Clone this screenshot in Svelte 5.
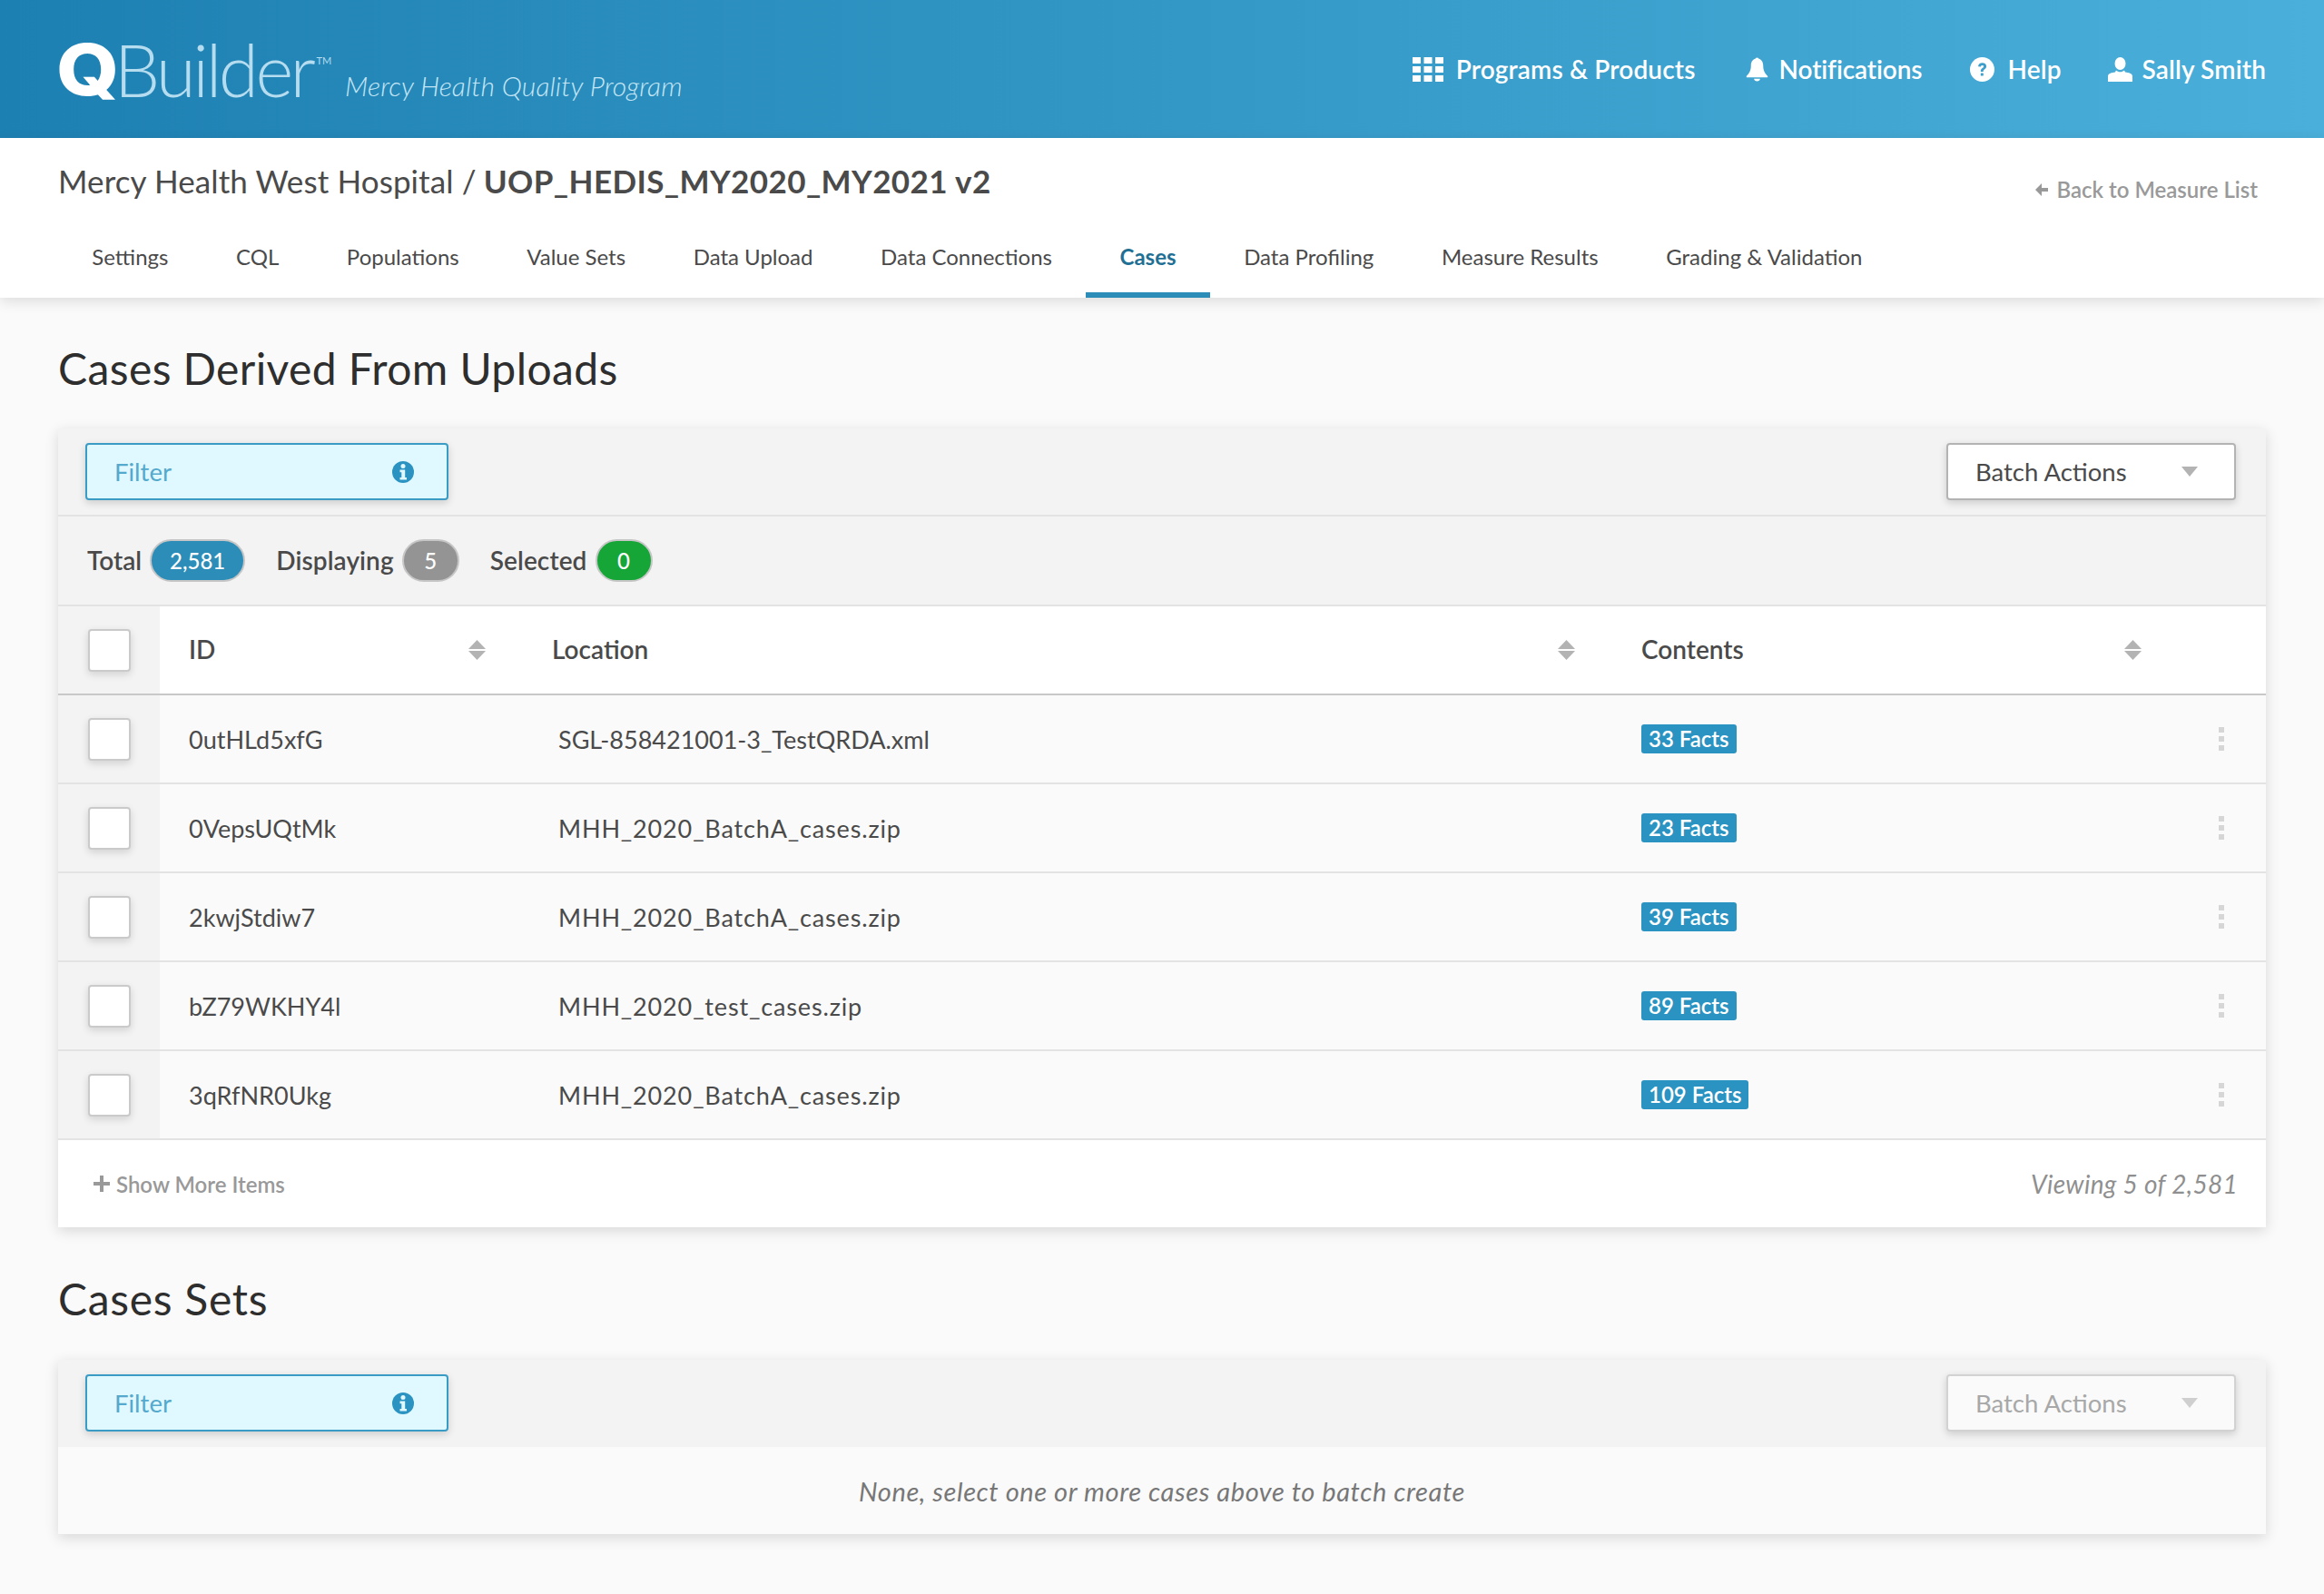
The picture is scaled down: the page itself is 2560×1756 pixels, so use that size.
<script>
  const tabs = ['Settings','CQL','Populations','Value Sets','Data Upload','Data Connections','Cases','Data Profiling','Measure Results','Grading & Validation'];
  const rows = [
    ['0utHLd5xfG','SGL-858421001-3_TestQRDA.xml','33 Facts'],
    ['0VepsUQtMk','MHH_2020_BatchA_cases.zip','23 Facts'],
    ['2kwjStdiw7','MHH_2020_BatchA_cases.zip','39 Facts'],
    ['bZ79WKHY4l','MHH_2020_test_cases.zip','89 Facts'],
    ['3qRfNR0Ukg','MHH_2020_BatchA_cases.zip','109 Facts']
  ];
  const cols = ['ID','Location','Contents'];
</script>

{#snippet toolbarItems(disabled)}
  <div class="filter">
    <span>Filter</span>
    <svg class="info" viewBox="0 0 24 24" width="24" height="24"><circle cx="12" cy="12" r="12" fill="#2b93c1"/><circle cx="12" cy="5.600" r="2.500" fill="#e0f8ff"/><path d="M8.500 9.600h5.700v8.400h1.800v2.600H8.500V18h1.800v-5.800H8.500z" fill="#e0f8ff"/></svg>
  </div>
  <div class="batch" class:disabled>
    <span>Batch Actions</span>
    <svg viewBox="0 0 18 11" width="18" height="11"><path d="M0 0h18L9 11z" fill="currentColor"/></svg>
  </div>
{/snippet}

{#snippet sortIcon()}
  <svg class="sort" viewBox="0 0 19 22" width="19" height="22"><path d="M9.500 0l9.500 10H0zM0 12h19L9.500 22z" fill="#b3b3b3"/></svg>
{/snippet}

<header class="top">
  <div class="brand">
    <div class="logo"><span class="q">Q</span><span class="builder">Builder</span><span class="tm">TM</span></div>
    <div class="program">Mercy Health Quality Program</div>
  </div>
  <nav class="topnav">
    <div class="tn">
      <svg viewBox="0 0 34 27" width="34" height="27" fill="#fff"><rect x="0" y="0" width="9" height="7"/><rect x="12.500" y="0" width="9" height="7"/><rect x="25" y="0" width="9" height="7"/><rect x="0" y="10" width="9" height="7"/><rect x="12.500" y="10" width="9" height="7"/><rect x="25" y="10" width="9" height="7"/><rect x="0" y="20" width="9" height="7"/><rect x="12.500" y="20" width="9" height="7"/><rect x="25" y="20" width="9" height="7"/></svg>
      <span>Programs &amp; Products</span>
    </div>
    <div class="tn bell">
      <svg viewBox="0 0 26 27" width="25" height="27" fill="#fff"><circle cx="13" cy="2.200" r="2.200"/><path d="M13 1c4.500 0 7 3.500 7 8 0 6 2 8.500 5 12 .6.800.2 1.600-.8 1.600H1.800c-1 0-1.400-.8-.8-1.600 3-3.500 5-6 5-12 0-4.500 2.500-8 7-8z"/><path d="M9.500 24.200h7c0 1.600-1.500 2.800-3.500 2.800s-3.500-1.200-3.500-2.800z"/></svg>
      <span>Notifications</span>
    </div>
    <div class="tn help">
      <svg viewBox="0 0 27 27" width="27" height="27"><circle cx="13.500" cy="13.500" r="13.500" fill="#fff"/><path d="M9 10.200c.3-2.500 2-3.900 4.600-3.900 2.700 0 4.500 1.600 4.500 3.800 0 1.700-.9 2.600-2.100 3.500-1 .7-1.300 1.200-1.300 2.300h-2.900c0-2 .6-3 1.900-3.900 1-.7 1.400-1.100 1.400-1.800 0-.8-.6-1.300-1.500-1.300-1 0-1.600.6-1.800 1.600z" fill="#3f9fcc"/><rect x="11.800" y="17.500" width="3" height="3" rx=".6" fill="#3f9fcc"/></svg>
      <span>Help</span>
    </div>
    <div class="tn user">
      <svg viewBox="0 0 27 27" width="27" height="27" fill="#fff"><ellipse cx="13.500" cy="7" rx="6" ry="7"/><path d="M9 14.500c1.300 1.200 2.800 1.800 4.500 1.800s3.200-.6 4.500-1.800l1 2c3.500.6 8 1.400 8 4.500V27H0v-6c0-3.100 4.500-3.900 8-4.500z"/></svg>
      <span>Sally Smith</span>
    </div>
  </nav>
</header>

<section class="sub">
  <div class="subhead">
    <h1><span class="site">Mercy Health West Hospital /</span> <strong>UOP_HEDIS_MY2020_MY2021 v2</strong></h1>
    <a class="back"><svg viewBox="0 0 15 16" width="15" height="16"><path d="M8 1L1 8l7 7v-5h7V6H8z" fill="#999"/></svg>Back to Measure List</a>
  </div>
  <div class="tabs">
    {#each tabs as t}
      <div class="tab" class:active={t === 'Cases'}>{t}</div>
    {/each}
  </div>
</section>

<main>
  <h2>Cases Derived From Uploads</h2>
  <div class="card">
    <div class="toolbar bordered">{@render toolbarItems(false)}</div>
    <div class="stats">
      <span>Total</span><b class="pill blue">2,581</b>
      <span class="lab">Displaying</span><b class="pill gray">5</b>
      <span class="lab">Selected</span><b class="pill green">0</b>
    </div>
    <div class="row head">
      <div class="chk"><i class="box"></i></div>
      {#each cols as c}
        <div class="cell">{c}{@render sortIcon()}</div>
      {/each}
      <div></div>
    </div>
    {#each rows as r}
      <div class="row">
        <div class="chk"><i class="box"></i></div>
        <div class="cell">{r[0]}</div>
        <div class="cell loc" class:zip={r[1].startsWith('MHH')}>{r[1]}</div>
        <div class="cell"><span class="facts">{r[2]}</span></div>
        <div class="dots"><i></i><i></i><i></i></div>
      </div>
    {/each}
    <div class="foot">
      <div class="more"><svg viewBox="0 0 18 18" width="18" height="18"><path d="M7 0h4v7h7v4h-7v7H7v-7H0V7h7z" fill="#999"/></svg>Show More Items</div>
      <div class="viewing">Viewing 5 of 2,581</div>
    </div>
  </div>

  <h2 class="second">Cases Sets</h2>
  <div class="card">
    <div class="toolbar">{@render toolbarItems(true)}</div>
    <div class="none">None, select one or more cases above to batch create</div>
  </div>
</main>

<style>
  :global(body) { margin: 0; background: #fafafa; font-family: Lato, "Open Sans", sans-serif; color: #4a4a4a; }
  .top { height: 152px; box-sizing: border-box; padding: 0 64px; display: flex; justify-content: space-between; align-items: center; background: linear-gradient(90deg, #1d80b2, #4aafda); color: #fff; }
  .brand { display: flex; align-items: flex-end; }
  .logo { display: flex; align-items: flex-start; height: 70px; line-height: 70px; }
  .q { font-family: Inter, sans-serif; font-size: 79px; font-weight: 800; color: #fff; margin-left: -2px; transform: scaleX(1.12); transform-origin: left center; }
  .builder { font-size: 80px; font-weight: 300; color: #b5dcef; letter-spacing: -3.500px; margin-left: 2px; }
  .tm { font-size: 11px; line-height: 11px; margin: 20px 0 0 4px; color: #b5dcef; }
  .program { font-size: 30px; font-style: italic; font-weight: 300; letter-spacing: .1px; color: #c6e6f5; margin-left: 15px; line-height: 34px; }
  .topnav { display: flex; align-items: center; }
  .tn { display: flex; align-items: center; gap: 14px; font-size: 28px; font-weight: 600; letter-spacing: .15px; margin-left: 55px; }
  .tn.bell { gap: 12px; letter-spacing: -.1px; }
  .tn.help { margin-left: 53px; }
  .tn.user { margin-left: 51px; gap: 11px; }
  .sub { height: 176px; background: #fff; box-shadow: 0 4px 14px rgba(0,0,0,.12); position: relative; display: flex; flex-direction: column; }
  .subhead { display: flex; justify-content: space-between; padding: 24px 73px 0 64px; height: 72px; box-sizing: border-box; align-items: flex-start; }
  h1 { margin: 0; font-size: 35px; font-weight: 400; letter-spacing: .1px; line-height: 46px; color: #4a4a4a; }
  h1 strong { font-weight: 700; margin-left: -1px; letter-spacing: .4px; }
  .back { display: flex; align-items: center; gap: 9px; font-size: 24px; font-weight: 600; color: #999; margin-top: 18px; }
  .tabs { display: flex; margin-top: auto; padding-left: 64px; }
  .tab { height: 90px; box-sizing: border-box; padding: 4px 37.300px 0; display: flex; align-items: center; font-size: 24px; border-bottom: 6px solid transparent; }
  .tab.active { color: #1f7094; font-weight: 700; border-bottom-color: #2b8db8; }
  main { padding: 0 64px 66px; }
  h2 { margin: 0; padding-top: 51px; height: 144px; box-sizing: border-box; font-size: 48px; font-weight: 400; letter-spacing: .4px; line-height: 54px; color: #2e2e2e; }
  h2.second { height: 146px; padding-top: 52px; letter-spacing: .7px; }
  .card { background: #fff; box-shadow: 0 4px 14px rgba(0,0,0,.14); }
  .toolbar { height: 96px; box-sizing: border-box; padding: 16px 33px 0 30px; display: flex; justify-content: space-between; align-items: flex-start; background: #f3f3f3; }
  .bordered { height: 97px; border-bottom: 2px solid #e3e3e3; }
  .filter, .batch { height: 63px; box-sizing: border-box; border-radius: 4px; display: flex; align-items: center; justify-content: space-between; font-size: 27.500px; box-shadow: 0 3px 8px rgba(0,0,0,.16); }
  .filter { width: 400px; border: 2px solid #3a9cc4; background: #e0f8ff; color: #55a9cc; padding: 0 36px 0 30px; }
  .batch { width: 319px; border: 2px solid #b3b3b3; background: #fff; padding: 0 40px 0 30px; color: #4a4a4a; }
  .batch svg { color: #b3b3b3; }
  .batch.disabled { background: #fafafa; border-color: #d2d2d2; color: #a8a8a8; }
  .batch.disabled svg { color: #cfcfcf; }
  .stats { height: 99px; box-sizing: border-box; border-bottom: 2px solid #e3e3e3; background: #f3f3f3; padding-left: 32px; display: flex; align-items: center; font-size: 28px; font-weight: 600; }
  .stats span { margin-bottom: 2px; }
  .lab { margin-left: 34px; letter-spacing: .1px; }
  .pill { height: 47px; min-width: 63px; box-sizing: border-box; margin-left: 9px; padding: 0 20px; border-radius: 24px; border: 2px solid #c6c6c6; color: #fff; font-size: 24px; font-weight: 500; display: flex; align-items: center; justify-content: center; }
  .blue { background: #2b8db8; } .gray { background: #949494; } .green { background: #16a637; }
  .row { height: 98px; box-sizing: border-box; display: grid; grid-template-columns: 112px 432px 1200px 616px 72px; background: #fafafa; border-bottom: 2px solid #e3e3e3; font-size: 27px; }
  .row.head { background: #fff; border-bottom-color: #c8c8c8; font-weight: 600; font-size: 28px; }
  .chk { background: #f3f3f3; display: flex; align-items: center; padding-left: 33px; }
  .box { display: block; width: 47px; height: 47px; box-sizing: border-box; background: #fff; border: 2px solid #cacaca; border-radius: 4px; box-shadow: 0 3px 8px rgba(0,0,0,.14); }
  .cell { display: flex; align-items: center; justify-content: space-between; padding: 1px 73px 0 32px; }
  .head .cell { padding-top: 0; padding-bottom: 2px; }
  .cell + .cell { padding-left: 0; }
  .cell:nth-child(4) { padding-right: 65px; }
  .cell.loc { padding-left: 7px; }
  .cell.zip { letter-spacing: .85px; }
  .sort { margin-top: 2px; }
  .facts { background: #2b93c1; color: #fff; font-size: 24px; font-weight: 600; height: 32px; line-height: 32px; padding: 0 8px; border-radius: 3px; margin-top: -1px; }
  .dots { display: flex; flex-direction: column; justify-content: center; gap: 4px; padding-left: 20px; }
  .dots i { display: block; width: 6px; height: 6px; background: #d6d6d6; }
  .foot { height: 96px; display: flex; justify-content: space-between; align-items: center; padding: 0 31px 0 39px; }
  .more { display: flex; align-items: center; gap: 7px; font-size: 24px; font-weight: 600; color: #999; }
  .viewing { font-size: 28px; font-style: italic; letter-spacing: .3px; color: #8f8f8f; }
  .none { height: 96px; display: flex; align-items: center; justify-content: center; background: #fafafa; font-size: 29px; letter-spacing: .6px; font-style: italic; color: #777; }
</style>
